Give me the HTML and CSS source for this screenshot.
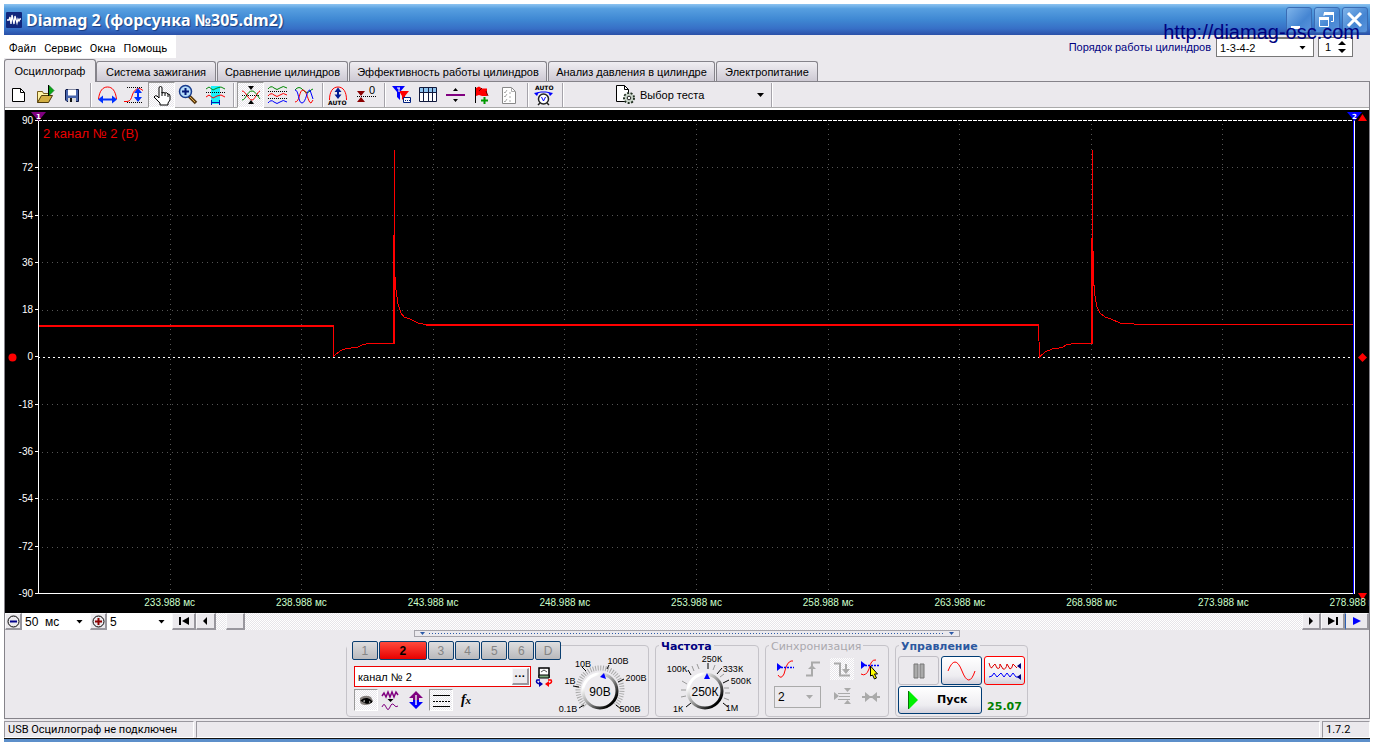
FILE: index.html
```html
<!DOCTYPE html>
<html lang="ru">
<head>
<meta charset="utf-8">
<title>Diamag 2</title>
<link rel="stylesheet" href="styles.css">
</head>
<body>
<div class="window">
  <header class="titlebar">
    <svg class="app-icon" width="16" height="16" viewBox="0 0 16 16"><rect width="16" height="16" rx="1" fill="#10267c"/><path d="M1 8h2l1-3 1 7 1-9 2 9 1-8 2 7 1-4 1 2 1-2h1" fill="none" stroke="#fff" stroke-width="1.3"/></svg>
    <h1 class="title">Diamag 2 (форсунка №305.dm2)</h1>
    <div class="win-buttons">
      <button class="win-btn" aria-label="Свернуть"><svg width="24" height="24" viewBox="0 0 24 24"><path d="M4 18h9v3H4z" fill="#fff"/></svg></button>
      <button class="win-btn" aria-label="Восстановить"><svg width="24" height="24" viewBox="0 0 24 24" fill="none" stroke="#fff"><path d="M9 8V5.500h9.500v8H16M4.500 10.500h9v8h-9z"/><path d="M9 5.500h10M4 10.500h10" stroke-width="3"/></svg></button>
      <button class="win-btn" aria-label="Закрыть"><svg width="24" height="24" viewBox="0 0 24 24"><path d="M5 5l13 13M18 5L5 18" stroke="#fff" stroke-width="3"/></svg></button>
    </div>
    <span class="watermark">http://diamag-osc.com</span>
  </header>

  <div class="menu-row">
    <nav class="menu"><button>Файл</button><button>Сервис</button><button>Окна</button><button>Помощь</button></nav>
    <div class="order">
      <label for="order">Порядок работы цилиндров</label>
      <span class="drop order-drop"><select id="order"><option>1-3-4-2</option></select></span>
      <span class="spin"><input aria-label="Цилиндр" value="1"><svg width="8" height="16" viewBox="0 0 8 16"><path d="M0 6l4-4 4 4zM0 10h8l-4 4z"/></svg></span>
    </div>
  </div>

  <div class="tabs" role="tablist">
    <button class="tab active" role="tab">Осциллограф</button>
    <button class="tab t2" role="tab">Система зажигания</button>
    <button class="tab t3" role="tab">Сравнение цилиндров</button>
    <button class="tab t4" role="tab">Эффективность работы цилиндров</button>
    <button class="tab t5" role="tab">Анализ давления в цилиндре</button>
    <button class="tab t6" role="tab">Электропитание</button>
  </div>

  <main class="page">
    <div class="toolbar">
      <button class="tool" aria-label="Новый"><svg viewBox="0 0 27 26"><path d="M7.500 6.500h8l4 4v9h-12z" fill="#fff" stroke="#000"/><path d="M15.500 6.500v4h4" fill="none" stroke="#000"/></svg></button>
      <button class="tool" aria-label="Открыть"><svg viewBox="0 0 27 26"><path d="M5.500 20.500v-11h5l1 2h6v3" fill="#fff3a6" stroke="#775c1a"/><path d="M5.500 20.500l4-7h11l-4 7z" fill="#d2ae42" stroke="#4d3a0c"/><path d="M17 3.500l5 5-5 5z" fill="#08a818" stroke="#056b10" stroke-width=".7"/><path d="M16.500 3v11" stroke="#000"/></svg></button>
      <button class="tool" aria-label="Сохранить"><svg viewBox="0 0 27 26"><path d="M7 7.500h12.500v12H8l-1.500-1.500v-10z" fill="#4865ac" stroke="#0b1746"/><path d="M9 7.500h8v6H9z" fill="#fff"/><path d="M9 16h8v4H9z" fill="#ddd"/><path d="M11 16h2v4h-2z" fill="#111"/></svg></button>
      <span class="sep"></span>
      <button class="tool" aria-label="Масштаб по горизонтали"><svg viewBox="0 0 27 26" fill="none"><path d="M4.500 17c1-8 4-12 9-12s8 4 9 12" stroke="#f00"/><path d="M8 17.500h11" stroke="#0030ff" stroke-width="2"/><path d="M4 17.500l5-4v8zM23 17.500l-5-4v8z" fill="#0030ff"/></svg></button>
      <button class="tool" aria-label="Масштаб по вертикали"><svg viewBox="0 0 27 26" fill="none"><path d="M3 19.500h3c7 0 3-13 13-13l3 2" stroke="#f00"/><path d="M6 5.500h16M6 20.500h16" stroke="#000" stroke-dasharray="1 1"/><path d="M17 9v9" stroke="#0030ff" stroke-width="2"/><path d="M17 6l4 5h-8zM17 20l4-5h-8z" fill="#0030ff"/></svg></button>
      <button class="tool on" aria-label="Рука"><svg viewBox="0 0 27 26"><path d="M11 14V6q0-1.500 1.500-1.500T14 6v5q3-1 3 0 2-1 3 1 2 0 2 2v4l-2 3v2h-8v-2l-6-6q1-2 3-1l2 2z" fill="#fff" stroke="#000"/><path d="M14 10v4M17 11v3M20 12v3" stroke="#000"/></svg></button>
      <button class="tool" aria-label="Лупа"><svg viewBox="0 0 27 26"><path d="M14 14l7 7" stroke="#5a3b12" stroke-width="3.500"/><path d="M15 15l5 5" stroke="#e7b04b"/><circle cx="10.500" cy="9.500" r="6" fill="#b5dcfa" stroke="#173c8e" stroke-width="1.500"/><path d="M7 9.500h7M10.500 6v7" stroke="#051a78" stroke-width="2"/></svg></button>
      <button class="tool" aria-label="Фрагмент"><svg viewBox="0 0 27 26" fill="none"><path d="M9 4h9v18H9z" fill="#19f2fb"/><path d="M4 7l3-2 4 3 4-2 4-1 4 2" stroke="#088a10"/><path d="M4 10.500h19" stroke="#000" stroke-dasharray="1 1"/><path d="M4 15l3-2 4 3 4-2 4-1 4 2" stroke="#f00"/><path d="M10 20.500h8M9.500 18v5M17.500 18v5" stroke="#001cb4"/></svg></button>
      <span class="sep"></span>
      <button class="tool on" aria-label="Совместить"><svg viewBox="0 0 27 26" fill="none"><path d="M5 18c4 0 5-9 10-9 3 0 4 3 8 8" stroke="#080"/><path d="M5 9c4 0 6 9 10 9 3 0 5-8 8-9" stroke="#f00"/><path d="M5 13.500h18" stroke="#000" stroke-dasharray="1 1"/><path d="M11 4h6l-3 4zM11 22h6l-3-4z" fill="#000"/></svg></button>
      <button class="tool" aria-label="Разделить"><svg viewBox="0 0 27 26" fill="none"><path d="M4 7q3-4 6-1t6 0 7 0" stroke="#080"/><path d="M4 9.500h19M4 16.500h19" stroke="#000" stroke-dasharray="1 1"/><path d="M4 14q3-4 6-1t6 0 7 0" stroke="#f00"/><path d="M4 21q3-4 6-1t6 0 7 0" stroke="#00f"/></svg></button>
      <button class="tool" aria-label="Наложить"><svg viewBox="0 0 27 26" fill="none"><path d="M4 8q4-5 8 0t8 0l2-1" stroke="#080"/><path d="M4 20c5 0 4-12 8-12s5 13 8 13l2-3" stroke="#f00"/><path d="M4 8c4 0 3 13 7 13s5-14 8-13l3 9" stroke="#00f"/></svg></button>
      <span class="sep"></span>
      <button class="tool" aria-label="Авто"><svg viewBox="0 0 27 26" fill="none"><path d="M3.500 18c0-8 3-13 8.500-13s8.500 5 8.500 13" stroke="#f00"/><path d="M12 9v5" stroke="#001c94" stroke-width="2"/><path d="M12 5.500l3.500 4.500h-7zM12 17l3.500-4.500h-7z" fill="#001c94"/><text x="2" y="23" class="auto">AUTO</text></svg></button>
      <button class="tool" aria-label="Ноль"><svg viewBox="0 0 27 26"><path d="M4 9h8l-4 5zM4 20h8l-4-5z" fill="#8b0000"/><path d="M4 14.500h20" stroke="#000" stroke-dasharray="1 1"/><text x="16" y="12" class="zero">0</text></svg></button>
      <span class="sep"></span>
      <button class="tool" aria-label="Фильтр"><svg viewBox="0 0 27 26"><path d="M4 4h13l-5 6v8l-3-3v-5z" fill="#00f"/><path d="M11 9h10l-4 5v6l-3-3v-3z" fill="#f00"/><path d="M9 6h3M11 6v4" stroke="#fff"/><path d="M15.500 15.500h7v5h-7z" fill="#fff" stroke="#002080"/><path d="M17 18.500h5" stroke="#002080" stroke-dasharray="1 1"/></svg></button>
      <button class="tool" aria-label="Таблица"><svg viewBox="0 0 27 26"><path d="M4.500 5.500h17v14h-17z" fill="#fff" stroke="#111a3e"/><path d="M5 6h16v4H5z" fill="#8ec4ef"/><path d="M4 10.500h18M8.500 6v14M13.500 6v14M17.500 6v14" stroke="#111a3e"/></svg></button>
      <button class="tool" aria-label="Линия"><svg viewBox="0 0 27 26"><path d="M4 12h19v2H4z" fill="#800080"/><path d="M11 9l2.500-3L16 9zM11 17h5l-2.500 3z"/></svg></button>
      <button class="tool" aria-label="Флаг"><svg viewBox="0 0 27 26"><path d="M6.500 5v16" stroke="#000"/><path d="M7 6l3-1.500 3 2h5V14h-5l-3-1-3 1z" fill="#f00"/><path d="M13 6l-3 3M17 9l2 5" stroke="#600"/><path d="M12 18.500h7M15.500 15v7" stroke="#090" stroke-width="2"/></svg></button>
      <button class="tool" aria-label="Список"><svg viewBox="0 0 27 26"><path d="M6.500 5.500h9l4 4v12h-13z" fill="#fff" stroke="#888"/><path d="M15.500 5.500v4h4M8 10l1 1 2-3M8 14l1 1 2-3M8 19l1 1 2-3M13 11h2M13 15h2M13 19h2" fill="none" stroke="#aaa"/></svg></button>
      <span class="sep"></span>
      <button class="tool" aria-label="Автоизмерение"><svg viewBox="0 0 27 26"><text x="4" y="8" class="auto">AUTO</text><path d="M5 13q1-3 5-3h5q4 0 5 3" fill="none" stroke="#00f"/><path d="M3 11l5-1-2 4zM22 11l-5-1 2 4z" fill="#00f"/><circle cx="12.500" cy="17" r="5" fill="#fff" stroke="#222" stroke-width="1.500"/><path d="M10.500 15l2 4 2-4" fill="none" stroke="#00f"/><path d="M9 21l-2 2M16 21l2 2" stroke="#222" stroke-width="1.500"/></svg></button>
      <span class="sep"></span>
      <button class="test"><svg width="22" height="20" viewBox="0 0 22 20"><path d="M1.500.500h8l4 4v12h-12z" fill="#fff" stroke="#000"/><path d="M9.500.500v4h4" fill="none" stroke="#000"/><circle cx="14" cy="13" r="5" fill="#c7d3c7" stroke="#223022" stroke-width="2" stroke-dasharray="2 1.500"/><circle cx="14" cy="13" r="4" fill="#c7d3c7"/><circle cx="14" cy="13" r="1.800" fill="#fff" stroke="#222"/></svg><span>Выбор теста</span><i class="caret"></i></button>
      <span class="sep"></span>
    </div>

    <section class="chart" aria-label="Осциллограмма">
      <div class="y-axis"><span>90</span><span>72</span><span>54</span><span>36</span><span>18</span><span>0</span><span>-18</span><span>-36</span><span>-54</span><span>-72</span><span>-90</span></div>
      <div class="plot">
        <svg class="trace" viewBox="0 0 1317 474" preserveAspectRatio="none" fill="none">
          <g class="grid-lines">
            <path d="M132.500 4V474M263.500 4V474M395.500 4V474M526.500 4V474M658.500 4V474M790.500 4V474M921.500 4V474M1053.500 4V474M1184.500 4V474"/>
            <path d="M4 47.500H1316M4 95.500H1316M4 142.500H1316M4 190.500H1316M4 284.500H1316M4 332.500H1316M4 379.500H1316M4 427.500H1316"/>
          </g>
          <path class="top-line" d="M0 .500H1316"/>
          <path class="zero-line" d="M0 237.500H1316"/>
          <path class="wave wide" d="M1 206H295M356 223V115M388 205H1000M1054 223V118"/>
          <path class="wave" d="M1 205.500H295.500V236L302 231L308 228.500L319 227.500L324 225L330 223.500H356.500V30V150L358 170L360 184L363 193L366 197L373 199.500L380 203L388 204.500H1000.500L1001.500 237L1007 232L1014 229L1024 227.500L1028 225L1035 223.500H1054.500V30V100L1055.500 160L1057 176L1059 187L1062 193L1067 197L1073 199L1082 203L1092 203.500L1100 204.500H1316"/>
          <path class="edge" d="M.500 0V473.500H1316"/>
          <path class="edge-blue" d="M1315.500 0V474"/>
          <path class="edge" d="M1316.500 0V474"/>
        </svg>
        <span class="channel-name">2 канал № 2 (В)</span>
        <svg class="mark mark-1" width="17" height="9" viewBox="0 0 17 9"><path d="M1 0h15L8.500 9z" fill="#800080"/><text x="6" y="7">1</text></svg>
        <svg class="mark mark-2" width="17" height="9" viewBox="0 0 17 9"><path d="M1 0h15L8.500 9z" fill="#00f"/><text x="6" y="7">2</text></svg>
        <svg class="zero-dot" width="9" height="9" viewBox="0 0 9 9"><circle cx="4.500" cy="4.500" r="4" fill="#f00"/></svg>
      </div>
      <div class="side">
        <svg width="9" height="7" viewBox="0 0 9 7"><path d="M0 7h9L4.500 0z" fill="#f00"/></svg>
        <svg width="9" height="9" viewBox="0 0 9 9"><path d="M0 4.500L4.500 0 9 4.500 4.500 9z" fill="#f00"/></svg>
        <svg width="9" height="7" viewBox="0 0 9 7"><path d="M0 0h9L4.500 7z" fill="#f00"/></svg>
      </div>
      <div class="x-axis"><span>233.988 мс</span><span>238.988 мс</span><span>243.988 мс</span><span>248.988 мс</span><span>253.988 мс</span><span>258.988 мс</span><span>263.988 мс</span><span>268.988 мс</span><span>273.988 мс</span><span>278.988 мс</span></div>
    </section>

    <div class="scroll-row">
      <button class="cell zoom-btn" aria-label="Уменьшить"><svg width="13" height="13" viewBox="0 0 13 13"><circle cx="6.500" cy="6.500" r="5.500" fill="none" stroke="#000"/><path d="M3 6.500h7" stroke="#00008b" stroke-width="2"/></svg></button>
      <span class="drop time-drop"><select aria-label="Время на экран"><option>50&nbsp; мс</option></select></span>
      <button class="cell zoom-btn" aria-label="Увеличить"><svg width="13" height="13" viewBox="0 0 13 13"><circle cx="6.500" cy="6.500" r="5.500" fill="none" stroke="#000"/><path d="M3 6.500h7M6.500 3v7" stroke="#8b0000" stroke-width="2"/></svg></button>
      <span class="drop step-drop"><select aria-label="Шаг"><option>5</option></select></span>
      <button class="cell first" aria-label="В начало"><svg width="12" height="8" viewBox="0 0 12 8"><path d="M1 0h2v8H1zM11 0v8L4 4z"/></svg></button>
      <button class="cell back" aria-label="Назад"><svg width="12" height="8" viewBox="0 0 12 8"><path d="M7 0v8L3 4z"/></svg></button>
      <div class="track"><button class="cell thumb" aria-label="Прокрутка"></button></div>
      <button class="cell fwd" aria-label="Вперёд"><svg width="12" height="8" viewBox="0 0 12 8"><path d="M4 0v8l4-4z"/></svg></button>
      <button class="cell last" aria-label="В конец"><svg width="12" height="8" viewBox="0 0 12 8"><path d="M1 0v8l7-4zM9 0h2v8H9z"/></svg></button>
      <button class="cell play" aria-label="Воспроизвести"><svg width="12" height="8" viewBox="0 0 12 8"><path d="M2 0v8l8-4z" fill="#00f"/></svg></button>
    </div>

    <div class="splitter"><i></i><b></b><i></i></div>

    <div class="controls">
      <section class="group channel">
        <div class="channel-col">
          <div class="numbers"><button>1</button><button class="sel">2</button><button>3</button><button>4</button><button>5</button><button>6</button><button>D</button></div>
          <div class="name-row">
            <span class="name-box"><input aria-label="Имя канала" value="канал № 2"><button class="cell" aria-label="Обзор">···</button></span>
            <button class="flat" aria-label="Датчик"><svg width="18" height="20" viewBox="0 0 18 20"><path d="M4 1h10v9H4z" fill="#fff" stroke="#000" stroke-width="1.500"/><path d="M4 8h10v3H4z" fill="#7aa67a" stroke="#000"/><path d="M6 5l3-2 3 2" fill="none" stroke="#555"/><path d="M5 13H2q-2 3 3 4" fill="none" stroke="#0000b0" stroke-width="1.500"/><path d="M4 14l4 3-4 3z" fill="#0000b0"/><path d="M13 13h3q2 3-3 4" fill="none" stroke="#f00" stroke-width="1.500"/><path d="M14 14l-4 3 4 3z" fill="#f00"/></svg></button>
          </div>
          <div class="icon-row">
            <button class="mini on" aria-label="Показать"><svg viewBox="0 0 24 22"><path d="M6 9q5-4 11-1l2 4q-2 4-8 4-4 0-5-3z" fill="#857f7c"/><path d="M8 12q5-4 10 1-5 3-10-1z" fill="#f3f1ef" stroke="#000"/><circle cx="13" cy="12" r="2.500"/><path d="M7 12q6-5 11 1" fill="none" stroke="#000" stroke-width="1.500"/></svg></button>
            <button class="mini" aria-label="Сглаживание"><svg viewBox="0 0 24 22" fill="none" stroke="#800080"><path d="M3 7l2-3 2 4 2-5 2 5 2-5 2 5 2-5 2 3" stroke-width="1.500"/><path d="M3 18q2-5 4 0t4 0 4-2 4 1"/><path d="M8.500 10h6l-3 3z" fill="#000" stroke="none"/></svg></button>
            <button class="mini" aria-label="Смещение"><svg viewBox="0 0 24 22"><path d="M12 2l7 7h-4v2H9V9H5z" fill="#800080"/><path d="M12 20l7-7h-4v-2H9v2H5z" fill="#00f"/><path d="M12 6v10" stroke="#ebe9ed" stroke-width="1.500"/></svg></button>
            <button class="mini on" aria-label="Уровни"><svg viewBox="0 0 24 22" stroke="#000"><path d="M4 6.500h17M4 17.500h17"/><path d="M4 12.500h17" stroke-dasharray="2 1"/></svg></button>
            <button class="mini fx" aria-label="Формула"><i>f<small>x</small></i></button>
          </div>
        </div>
        <svg class="knob" width="94" height="68" viewBox="0 0 94 68">
          <defs><linearGradient id="rim" x1="0" y1="0" x2="1" y2="1"><stop offset=".2" stop-color="#fff"/><stop offset=".55" stop-color="#888"/><stop offset=".85" stop-color="#000"/></linearGradient></defs>
          <path class="ring" d="M31 58A22 22 0 1 1 61 58"/>
          <path d="M32 23l-4-4M53 21l2-4M64 34l6-3M25 39l-6-1M62 57l5 4M30 57l-5 3" stroke="#000"/>
          <circle cx="46" cy="43" r="17" fill="#edebef" stroke="url(#rim)" stroke-width="3"/>
          <path d="M50 25l2 6-6-2z" fill="#00f"/>
          <text x="46" y="48" class="knob-value">90В</text>
          <text x="29" y="19">10В</text><text x="64" y="16">100В</text><text x="16" y="36">1В</text><text x="82" y="33">200В</text><text x="14" y="64">0.1В</text><text x="76" y="64">500В</text>
        </svg>
      </section>

      <section class="group freq">
        <h2>Частота</h2>
        <svg class="knob" width="98" height="64" viewBox="0 0 98 64">
          <path d="M32 25l-3-5M49 19v-6M58 24l5-6M64 33l6-3M32 53l-5 4M64 53l5 4" stroke="#000"/>
          <path d="M28 34l-5-3M27 40h-5M27 46l-5 1M35 21l-2-5M40 19l-2-5M65 38h5M66 43h5M65 48l5 2M54 20l2-5M61 27l4-3" stroke="#999"/>
          <circle cx="46" cy="41" r="17" fill="#edebef" stroke="url(#rim)" stroke-width="3"/>
          <path d="M48 23l3 6h-6z" fill="#00f"/>
          <text x="46" y="46" class="knob-value">250К</text>
          <text x="18" y="22">100К</text><text x="53" y="12">250К</text><text x="74" y="22">333К</text><text x="82" y="34">500К</text><text x="19" y="62">1К</text><text x="73" y="61">1М</text>
        </svg>
      </section>

      <section class="group sync">
        <h2>Синхронизация</h2>
        <div class="sync-row">
          <button class="mini" aria-label="Источник"><svg viewBox="0 0 24 22" fill="none"><path d="M4 17q3 5 6-1l2-7q3-7 7-6" stroke="#f00"/><path d="M3 5l5 4-5 4z" fill="#00f"/><path d="M7 9.500h13" stroke="#00f" stroke-width="1.500" stroke-dasharray="2 1"/></svg></button>
          <button class="mini" aria-label="Фронт"><svg viewBox="0 0 24 22" fill="none"><path d="M4 17.500h6v-13h8" stroke="#aaa" stroke-width="2"/><path d="M6 11l4-4 4 4z" fill="#aaa"/></svg></button>
          <button class="mini dither" aria-label="Спад"><svg viewBox="0 0 24 22" fill="none"><path d="M4 5.500h6v12h10M16 6v9" stroke="#aaa" stroke-width="2"/><path d="M12 11h8l-4 5z" fill="#aaa"/></svg></button>
          <button class="mini" aria-label="Курсор"><svg viewBox="0 0 24 22" fill="none"><path d="M3 16q5 3 8-5 2-10 7-9" stroke="#f00"/><path d="M3 3v8l5-4z" fill="#00f"/><path d="M7 7.500h14" stroke="#00f" stroke-width="1.500" stroke-dasharray="2 1"/><path d="M12.500 8v10l2-1 2 4 2-1-2-4h3z" fill="#ff0" stroke="#000"/></svg></button>
        </div>
        <div class="sync-row second">
          <span class="drop sync-drop"><select aria-label="Канал синхронизации"><option>2</option></select></span>
          <button class="mini" aria-label="Уровень"><svg viewBox="0 0 24 22" fill="none" stroke="#aaa"><path d="M3 6v8l5-4zM13 2h7l-3.500 4zM13 18h7l-3.500-4z" fill="#aaa" stroke="none"/><path d="M7 7.500h12M8 10.500h11M7 13.500h12"/></svg></button>
          <button class="mini" aria-label="Центр"><svg viewBox="0 0 24 22"><path d="M3 11h18" stroke="#aaa" stroke-width="2"/><path d="M6 6v10l6-5zM18 6v10l-6-5z" fill="#aaa"/></svg></button>
        </div>
      </section>

      <section class="group run">
        <h2>Управление</h2>
        <div class="run-grid">
          <button class="run-btn pause" aria-label="Пауза"><svg width="12" height="16" viewBox="0 0 12 16"><path d="M1 1h4v14H1zM7 1h4v14H7z" fill="#aaa" stroke="#777"/></svg></button>
          <button class="run-btn" aria-label="Однократно"><svg width="32" height="22" viewBox="0 0 32 22"><path d="M2 11Q9-7 16 11t13 0" fill="none" stroke="#f00"/></svg></button>
          <button class="run-btn red" aria-label="Непрерывно"><svg width="34" height="20" viewBox="0 0 34 20" fill="none"><path d="M1 2q2 8 4 3l2-2 2 4q3 2 3-4l3 5q3 1 4-5l3 5q2 0 3-5l4 4" stroke="#d00"/><path d="M1 16l3-1 2-3 3 4 4-4 3 4 3-4 3 4 3-4 3 4h3" stroke="#00f"/><path d="M33 2v6l-4-3zM33 13v6l-4-3z" fill="#000080"/></svg></button>
          <button class="run-btn start"><svg width="10" height="18" viewBox="0 0 10 18"><path d="M1 0v18l9-9z" fill="#00f000"/><path d="M.500 0v18" stroke="#087008"/></svg><span>Пуск</span></button>
          <output>25.07</output>
        </div>
      </section>
    </div>
  </main>

  <footer class="status"><span class="usb">USB Осциллограф не подключен</span><span class="msg"></span><span class="ver">1.7.2</span></footer>
</div>
</body>
</html>
```
FILE: styles.css
```css
:root {
  --face: #ebe9ed;
  --ui: 11px/14px "Liberation Sans", Arial, sans-serif;
  --tahoma: 11px/15px Roboto, "Noto Sans", sans-serif;
  --strong: bold 11px/14px "DejaVu Sans", sans-serif;
}
* { box-sizing: border-box; }
body {
  margin: 0;
  padding: 4px 4px 0;
  height: 100vh;
  background: #fff;
  font: var(--ui);
  color: #000;
}
button, select, input { font: inherit; color: inherit; margin: 0; padding: 0; border: 0; border-radius: 0; background: none; }
button { display: flex; align-items: center; justify-content: center; white-space: nowrap; }
svg { display: block; flex: none; }
h1, h2 { margin: 0; }
.window {
  display: flex;
  flex-direction: column;
  height: 100%;
  background: var(--face);
  border-bottom: 3px solid #5c8fca;
}

.titlebar {
  position: relative;
  flex: none;
  display: flex;
  align-items: center;
  gap: 4px;
  height: 31px;
  padding: 0 2px;
  background: linear-gradient(#8cc3f0, #579fe0 15%, #3f88d3 50%, #376fc6 80%, #2a50a8);
}
.title { flex: 1; font: bold 16px/20px "Noto Sans", sans-serif; color: #fff; text-shadow: 1px 1px 1px #1b3d80; white-space: nowrap; }
.win-buttons { display: flex; gap: 2px; }
.win-btn { width: 26px; height: 26px; border: 1px solid #3a6cb4; border-radius: 3px; background: linear-gradient(135deg, #7eb4ea, #4585d2 60%, #5b95dc); }
.watermark { position: absolute; right: 10px; top: 17px; font-size: 20px; line-height: 22px; color: #000080; z-index: 2; }

.menu-row { flex: none; display: flex; justify-content: space-between; height: 24px; padding-right: 17px; }
.menu { display: flex; gap: 8px; padding: 3px 9px 0 5px; height: 23px; background: #fff; font: var(--tahoma); }
.order { display: flex; align-items: center; gap: 4px; color: #000080; }
.drop { position: relative; display: block; }
.drop select { appearance: none; width: 100%; height: 100%; padding-left: 3px; color: #000; }
.drop::after { content: ""; position: absolute; right: 7px; top: calc(50% - 2px); width: 7px; height: 4px; background: #000; clip-path: polygon(0 0, 100% 0, 50% 100%); pointer-events: none; }
.order-drop { width: 98px; height: 20px; margin-left: 1px; background: #fff; border: 1px solid #777; border-top-width: 2px; }
.spin { display: flex; align-items: center; width: 35px; height: 20px; padding-right: 6px; background: #fff; border: 1px solid #777; color: #000; }
.spin input { width: 20px; flex: 1; min-width: 0; padding-left: 6px; }

.tabs { flex: none; display: flex; align-items: flex-end; gap: 1px; height: 22px; }
.tab { height: 20px; border: 1px solid #85838a; border-bottom: 0; border-radius: 3px 3px 0 0; background: linear-gradient(#f0eef2, #cdc9d3); width: 120px; }
.tab.active { width: 92px; height: 23px; margin-bottom: -1px; margin-right: -1px; background: var(--face); z-index: 1; }
.t3 { width: 131px; } .t4 { width: 198px; } .t5 { width: 167px; } .t6 { width: 102px; }

.page { flex: 1; min-height: 0; display: flex; flex-direction: column; border: 1px solid #85838a; }
.toolbar { flex: none; display: flex; height: 28px; border-bottom: 2px solid #fff; box-shadow: inset 0 -1px #aaa; }
.tool { width: 27px; height: 26px; }
.tool svg { width: 27px; height: 26px; }
.on, .dither {
  background: conic-gradient(#fff 25%, #e7e5ea 0 50%, #fff 0 75%, #e7e5ea 0) 0 0 / 2px 2px;
}
.on { border: 1px solid #fff; border-top-color: #999; border-left-color: #999; }
.auto { font: bold 6px "DejaVu Sans", sans-serif; fill: #000; }
.zero { font: 11px "Liberation Sans", sans-serif; }
.sep { width: 8px; height: 24px; margin-top: 1px; background: linear-gradient(90deg, transparent 4px, #a5a3aa 4px 5px, #fff 5px 6px, transparent 6px); }
.test { width: 201px; padding-left: 49px; gap: 3px; justify-content: flex-start; }
.caret { width: 7px; height: 4px; margin-left: auto; margin-right: 3px; background: #000; clip-path: polygon(0 0, 100% 0, 50% 100%); }

.chart {
  flex: 1;
  min-height: 0;
  display: grid;
  grid-template: minmax(0, 1fr) 19px / 33px minmax(0, 1fr) 14px;
  padding-top: 10px;
  background: #000;
  color: #fff;
  overflow: hidden;
}
.y-axis { display: flex; flex-direction: column; justify-content: space-between; margin: -6px 0; font: 10px/13px "Liberation Sans", sans-serif; text-align: right; }
.y-axis span { padding-right: 5px; background: linear-gradient(#fff, #fff) right 6px / 3px 1px no-repeat; }
.plot { position: relative; }
.trace { width: 100%; height: 100%; shape-rendering: crispEdges; }
.trace path { vector-effect: non-scaling-stroke; }
.grid-lines { stroke: #555; stroke-dasharray: 1 4; }
.top-line { stroke: #fff; stroke-dasharray: 4 1; }
.zero-line { stroke: #fff; stroke-dasharray: 2 3; }
.wave { stroke: #f00; }
.wide { stroke-width: 2; }
.edge { stroke: #fff; }
.edge-blue { stroke: #00f; }
.channel-name { position: absolute; left: 5px; top: 6px; font-size: 13px; line-height: 15px; color: #e80000; }
.mark { position: absolute; top: -8px; }
.mark text { font: bold 7px "DejaVu Sans", sans-serif; fill: #fff; }
.mark-1 { left: -8px; }
.mark-2 { right: -8px; }
.zero-dot { position: absolute; left: -30px; top: calc(50% - 4px); }
.side { display: flex; flex-direction: column; align-items: center; justify-content: space-between; margin: -6px 0; }
.x-axis { grid-column: 2; display: grid; grid-template-columns: repeat(10, 1fr); margin: 3px -5% 0 5%; font: 10px/12px "Liberation Sans", sans-serif; text-align: center; color: #ccffcc; white-space: nowrap; }

.scroll-row { flex: none; display: flex; height: 17px; background: #fff; }
.cell { background: var(--face); border: 1px solid #f8f8fa; border-right: 2px solid #99979e; border-bottom: 2px solid #99979e; }
.zoom-btn { width: 17px; }
.time-drop { width: 68px; }
.step-drop { width: 65px; }
.time-drop, .step-drop { font-size: 12px; }
.first { width: 24px; }
.back { width: 20px; }
.track { flex: 1; display: flex; padding-left: 10px; background: conic-gradient(#fff 25%, #e7e5ea 0 50%, #fff 0 75%, #e7e5ea 0) 0 0 / 2px 2px; }
.thumb { width: 19px; }
.fwd { width: 19px; }
.last { width: 24px; }
.play { width: 24px; border-left: 1px solid #2a60b8; }

.splitter { flex: none; align-self: center; display: flex; align-items: center; gap: 4px; width: 546px; height: 7px; padding: 0 5px; border: 1px solid #a5a3aa; }
.splitter i { width: 5px; height: 3px; background: #2c5aa8; clip-path: polygon(0 0, 100% 0, 50% 100%); }
.splitter b { flex: 1; height: 1px; background: repeating-linear-gradient(90deg, #2c5aa8 0 1px, transparent 1px 3px); }

.controls { flex: none; display: flex; justify-content: center; gap: 6px; padding: 8px 0 1px; }
.group { height: 72px; border: 1px solid #c5c3c9; border-radius: 4px; }
.group h2 { width: max-content; margin: -6px 0 0 3px; padding: 0 2px; background: var(--face); font: var(--strong); color: #000080; }
.channel { display: flex; width: 303px; }
.channel-col { width: 207px; }
.numbers { display: flex; gap: 1px; width: 214px; margin-top: -5px; padding: 0 0 0 5px; background: var(--face); font-size: 12px; }
.numbers button { flex: 1; height: 19px; border: 1px solid #0b3f70; border-radius: 2px; background: linear-gradient(#dededf, #b9b9bc); color: #858585; }
.numbers .sel { flex: 0 0 48px; background: linear-gradient(#ff4a3c, #e80000); color: #000; font-weight: bold; }
.name-row { display: flex; gap: 4px; margin: 6px 0 0 7px; }
.name-box { display: flex; flex: none; width: 177px; height: 21px; padding: 1px; border: 1px solid #e00; background: #fff; }
.name-box input { flex: 1; min-width: 0; padding-left: 2px; }
.name-box button { width: 17px; font-weight: bold; }
.icon-row { display: flex; gap: 1px; margin: 2px 0 0 7px; }
.mini { width: 24px; height: 22px; flex: none; }
.mini svg { width: 24px; height: 22px; }
.fx { font: bold italic 14px/16px "Liberation Serif", serif; }
.fx small { font-size: 11px; }
.knob { font: 9px "Liberation Sans", sans-serif; text-anchor: middle; }
.channel .knob { margin-top: 2px; }
.knob-value { font-size: 12px; }
.ring { fill: none; stroke: #aaa; stroke-width: 5; stroke-dasharray: 1 1.5; }
.freq { width: 104px; }
.freq .knob { margin: -4px 0 0 3px; }
.sync { width: 124px; }
.sync h2 { color: #aaa8ae; font-weight: normal; }
.sync-row { display: flex; gap: 4px; margin: 4px 0 0 8px; }
.second { margin-top: 6px; }
.sync-drop { width: 47px; height: 22px; margin-right: 6px; border: 1px solid #aaa; font-size: 12px; }
.sync-drop::after { background: #aaa; }
.run { width: 133px; }
.run h2 { color: #2c58a0; }
.run-grid { display: grid; grid-template-columns: 41px 41px 41px; grid-template-rows: 29px 28px; gap: 1px 2px; margin: 2px 0 0 2px; }
.run-btn { border: 1px solid #003c74; border-radius: 3px; background: linear-gradient(#fff, #eeedf1 70%, #d4d2dc); }
.pause { border-color: #c0bec5; background: var(--face); }
.red { border-color: #f00; }
.start { grid-column: span 2; justify-content: flex-start; padding-left: 9px; gap: 19px; font: var(--strong); }
output { align-self: end; font: var(--strong); color: #008000; text-align: center; }

.status { flex: none; display: flex; gap: 2px; padding: 2px 0 0; font: var(--tahoma); border-bottom: 1px solid #111; white-space: nowrap; }
.status span { height: 17px; border: 1px solid #fff; border-top-color: #99979e; border-left-color: #99979e; padding-left: 3px; }
.usb { width: 190px; }
.msg { flex: 1; }
.ver { width: 48px; }
```
